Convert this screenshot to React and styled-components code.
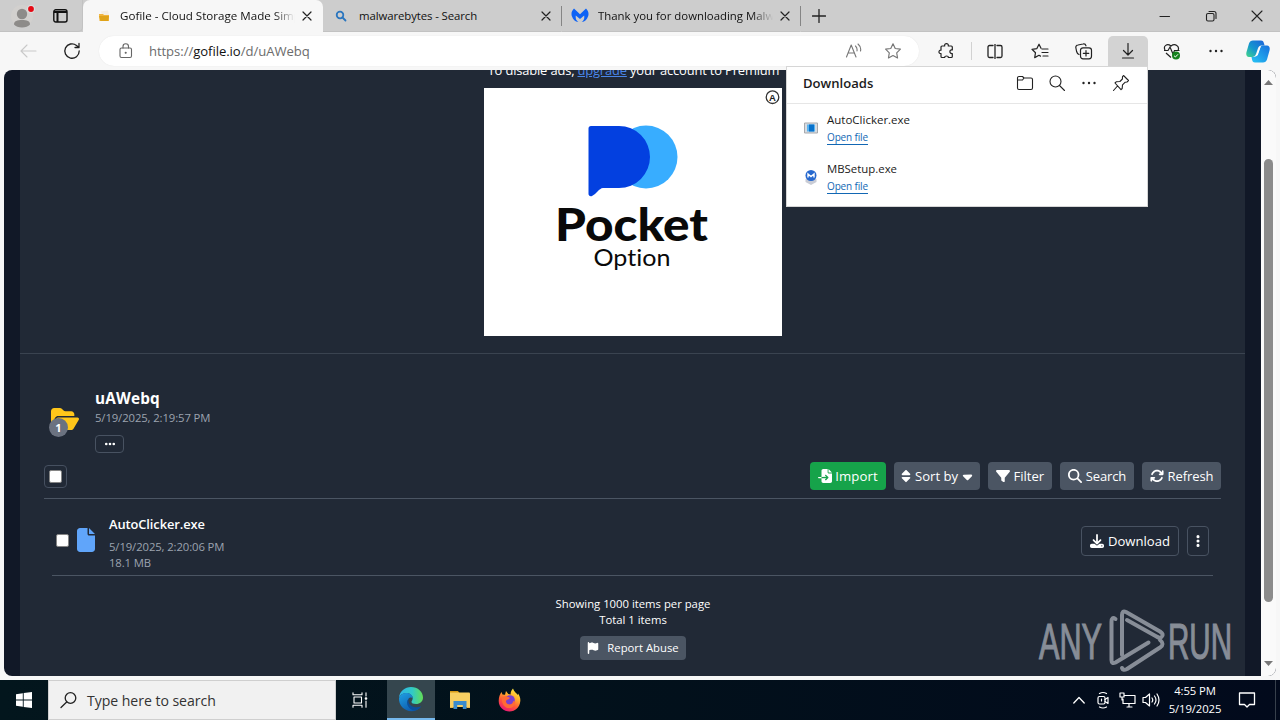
import React from "react";
import styled, { createGlobalStyle } from "styled-components";
import {
  FaFileImport, FaSort, FaCaretDown, FaFilter, FaMagnifyingGlass, FaArrowsRotate,
  FaDownload, FaEllipsisVertical, FaEllipsis, FaFolderOpen, FaFile, FaFlag,
} from "react-icons/fa6";

const Global = createGlobalStyle`
  * { box-sizing: border-box; }
  body { margin: 0; overflow: hidden; font-family: "Open Sans", "Noto Sans", sans-serif; }
  svg { display: block; flex: none; }
`;

const Desktop = styled.div`
  width: 1280px; height: 720px; display: flex; flex-direction: column;
  background: #f7f7f7; position: relative; overflow: hidden;
`;

const Text = styled.span`
  font-size: ${(p) => p.$size || 12}px;
  line-height: ${(p) => p.$line || 16}px;
  letter-spacing: ${(p) => p.$track || 0}px;
  font-weight: ${(p) => p.$weight || 400};
  color: ${(p) => p.$color || "inherit"};
  white-space: nowrap;
`;

/* Browser chrome */
const TabStrip = styled.div`
  height: 32px; display: flex; background: #cdcdcd; flex: none;
`;
const ProfileArea = styled.div`
  width: 83px; display: flex; align-items: center; padding: 0 14px 0 10px; gap: 17px;
  border-bottom: 1px solid #c2c2c2; border-right: 1px solid #c2c2c2;
  border-radius: 0 0 5px 0;
`;
const Tab = styled.div`
  width: ${(p) => p.$width || 238}px; height: 32px; display: flex; align-items: center;
  padding-left: ${(p) => p.$pad || 11}px;
  background: ${(p) => (p.$active ? "#f7f7f7" : "transparent")};
  border-radius: ${(p) => (p.$active ? "7px 7px 0 0" : "0")};
  border-bottom: ${(p) => (p.$active ? "none" : "1px solid #c2c2c2")};
`;
const TabTitle = styled.div`
  width: 175px; height: 20px; margin-left: ${(p) => p.$gap || 10}px; overflow: hidden; color: #111;
  display: flex; align-items: center;
  ${(p) => p.$fade && "mask-image: linear-gradient(90deg, #000 88%, transparent 100%);"}
`;
const TabClose = styled.div`
  margin-left: 7px;
`;
const TabDivider = styled.div`
  width: 1px; height: 20px; margin-top: 6px; background: #858585;
`;
const StripRest = styled.div`
  flex: 1; display: flex; align-items: center; padding-left: 11px; border-bottom: 1px solid #c2c2c2;
`;
const WindowButtons = styled.div`
  margin-left: auto; display: flex; gap: 32px; padding-right: 16px; align-items: center;
`;
const Toolbar = styled.div`
  height: 38px; flex: none; display: flex; align-items: center; background: #f7f7f7; padding-left: 20px;
`;
const NavButtons = styled.div`
  width: 79px; display: flex; gap: 26px; align-items: center;
`;
const AddressBar = styled.div`
  width: 821px; height: 30px; border-radius: 15px; background: #fff;
  display: flex; align-items: center; padding: 0 17px 0 20px; box-shadow: 0 0 1px #ddd;
`;
const Url = styled.div`
  margin-left: 16px; flex: 1; color: #6c6c6c; display: flex;
  b { font-weight: 400; color: #111; }
`;
const AddressActions = styled.div`
  display: flex; gap: 22px; align-items: center;
`;
const Tools = styled.div`
  flex: 1; display: flex; align-items: center;
`;
const Tool = styled.div`
  width: ${(p) => p.$width || 44}px; height: 30px; flex: none; display: flex; align-items: center; justify-content: center;
  background: ${(p) => (p.$pressed ? "#d3d3d3" : "transparent")}; border-radius: 5px 5px 0 0;
`;
const ToolDivider = styled.div`
  width: 1px; height: 18px; background: #d2d2d2; margin: 0 11px 0 -4px;
`;

/* Page */
const Viewport = styled.div`
  margin: 0 4px; height: 606px; flex: none; display: flex; border-radius: 8px; overflow: hidden; background: #111827;
`;
const Site = styled.div`
  width: 1225px; margin: 0 16px; background: #212936; overflow: hidden; color: #fff;
  display: flex; flex-direction: column;
`;
const AdSection = styled.section`
  height: 284px; flex: none; border-bottom: 1px solid #3a4350; display: flex; flex-direction: column; align-items: center;
`;
const AdNotice = styled.div`
  height: 24px; margin-top: -12px; padding-left: 2px; display: flex; align-items: center;
  a { color: #4a86e8; text-decoration: underline; }
`;
const AdBanner = styled.div`
  width: 298px; height: 248px; margin-top: 6px; margin-left: 1px; background: #fff;
  display: flex; flex-direction: column;
`;
const AdMark = styled.div`
  align-self: flex-end; margin: 2px 2px 0 0;
`;
const BrandDrawing = styled.svg`
  margin: 17px 0 0 71px; font-variant-ligatures: none;
`;
const FolderSection = styled.section`
  display: flex; padding: 34px 0 0 31px; height: 108px; flex: none;
`;
const FolderIcon = styled.div`
  width: 44px; color: #ffc61a; padding-top: 17px;
`;
const CountBadge = styled.div`
  width: 19px; height: 19px; margin: -15px 0 0 -2px; border-radius: 50%; background: #6b7280; position: relative;
  display: flex; align-items: center; justify-content: center; color: #fff;
`;
const Column = styled.div`
  display: flex; flex-direction: column; align-items: ${(p) => p.$align || "flex-start"};
`;
const OutlineButton = styled.div`
  width: ${(p) => p.$width}px; height: ${(p) => p.$height}px; border: 1px solid #485261; border-radius: 4px;
  display: flex; align-items: center; justify-content: center; gap: 4px; color: #fff;
`;
const Actions = styled.div`
  margin: 0 24px; height: 37px; flex: none; border-bottom: 1px solid #4b5563; display: flex; gap: 8px;
`;
const SolidButton = styled.div`
  width: ${(p) => p.$width}px; height: ${(p) => p.$height || 28}px; border-radius: 4px;
  background: ${(p) => (p.$primary ? "#16a34a" : "#4b5563")}; color: #fff;
  display: flex; align-items: center; justify-content: center; gap: ${(p) => p.$gap || 3}px;
`;
const CheckFrame = styled.div`
  width: 23px; height: 23px; margin: 3px auto 0 0; border: 1px solid #465060; border-radius: 4px;
  display: flex; align-items: center; justify-content: center;
`;
const CheckBox = styled.div`
  width: 13px; height: 13px; background: #fff; border: 1px solid #858585; border-radius: 2px;
  margin-top: ${(p) => p.$top || 0}px;
`;
const FileRow = styled.div`
  margin: 0 32px; height: 77px; flex: none; border-bottom: 1px solid #4b5563;
  display: flex; padding: 16px 4px 0 4px;
`;
const FileGlyph = styled.div`
  margin: 13px 14px 0 8px; color: #60a5fa;
  svg { width: 18px; height: 24px; }
`;
const FileActions = styled.div`
  margin: 11px 0 0 auto; display: flex; gap: 8px;
`;
const Footer = styled.footer`
  display: flex; flex-direction: column; align-items: center; padding: 20px 0 0 1px;
`;
const Gap = styled.div`
  height: ${(p) => p.$h}px;
`;
const Scrollbar = styled.div`
  width: 15px; background: #fafafa; display: flex; flex-direction: column; align-items: center; padding: 10px 0;
`;
const Thumb = styled.div`
  width: 9px; height: 443px; margin-top: 74px; border-radius: 5px; background: #8b8b8b;
`;

/* Downloads flyout lies over the page */
const Flyout = styled.div`
  position: absolute; left: 786px; top: 66px; width: 362px; height: 141px; background: #fff;
  border: 1px solid #d6d6d6; color: #1b1b1b;
`;
const FlyoutHeader = styled.div`
  height: 37px; border-bottom: 1px solid #e6e6e6; display: flex; align-items: center; padding: 0 17px 5px 16px;
`;
const FlyoutTools = styled.div`
  margin-left: auto; display: flex; align-items: center; gap: 14px;
`;
const DotsSlot = styled.div`
  width: 18px; display: flex; justify-content: center;
`;
const DownloadItem = styled.div`
  height: 49px; display: flex; padding: 8px 0 0 16px; gap: 8px;
`;
const DownloadIcon = styled.div`
  padding-top: 8px;
`;
const OpenLink = styled.div`
  color: #1267b4; border-bottom: 1px solid #1267b4; height: 16px; display: flex; margin-top: 1px;
`;

/* Watermark lies over the page */
const Watermark = styled.svg`
  position: absolute; left: 1036px; top: 608px;
`;

/* Taskbar */
const Taskbar = styled.div`
  margin-top: 4px; height: 40px; flex: none; display: flex;
  background: linear-gradient(90deg, #03161d 0%, #02111b 45%, #020a1c 100%); color: #fff;
`;
const StartButton = styled.div`
  width: 48px; display: flex; align-items: center; justify-content: center;
`;
const SearchBox = styled.div`
  width: 288px; background: #f1f1f1; border: 1px solid #cfcfcf; display: flex; align-items: center;
  padding: 1px 0 0 11px; gap: 9px; color: #333;
`;
const TaskItem = styled.div`
  width: ${(p) => p.$width || 48}px; display: flex; align-items: center; justify-content: center;
  background: ${(p) => (p.$active ? "#35464e" : "transparent")};
  border-bottom: ${(p) => (p.$active ? "2px solid #76b9ed" : "none")};
  padding-right: ${(p) => p.$shift || 0}px;
`;
const Tray = styled.div`
  margin-left: auto; display: flex; align-items: center; gap: 6px; padding-right: 4px;
`;
const TrayIcon = styled.div`
  width: 18px; display: flex; justify-content: center;
`;
const Clock = styled.div`
  width: 60px; display: flex; flex-direction: column; align-items: center; margin: 0 1px 0 -1px;
`;
const NoticeIcon = styled.div`
  margin-left: 6px;
`;
const PeekEdge = styled.div`
  width: 1px; height: 40px; background: #37404c; margin-left: 13px;
`;

const Line = ({ w = 16, h = w, box = `0 0 ${w} ${h}`, color = "#222", sw = 1.1, children }) => (
  <svg width={w} height={h} viewBox={box} fill="none" stroke={color} strokeWidth={sw} strokeLinecap="round" strokeLinejoin="round">
    {children}
  </svg>
);
const Cross = ({ size = 10 }) => (
  <Line w={size} h={size} box="0 0 10 10" sw={1.2}><path d="M1 1l8 8M9 1l-8 8" /></Line>
);
const Dots = () => (
  <svg width="16" height="16" fill="#222"><circle cx="2.500" cy="8" r="1.200" /><circle cx="8" cy="8" r="1.200" /><circle cx="13.500" cy="8" r="1.200" /></svg>
);

const Profile = () => (
  <svg width="26" height="28" viewBox="0 0 26 28">
    <circle cx="12" cy="14" r="11" fill="#d2d0ce" />
    <circle cx="12" cy="12" r="5.200" fill="#8d8b89" />
    <path d="M4 22.500c0-3.500 3-4.500 8-4.500s8 1 8 4.500c-3 4-13 4-16 0z" fill="#8d8b89" />
    <circle cx="21" cy="7" r="4" fill="#ddd" /><circle cx="21" cy="7" r="2.900" fill="#e50914" />
  </svg>
);
const Workspaces = () => (
  <svg width="15" height="14" viewBox="0 0 15 14" fill="none" stroke="#111" strokeWidth="1.400">
    <rect x=".8" y=".8" width="13.200" height="12.200" rx="2" /><path d="M1 3h13M4.500 3v10" strokeWidth="2" />
  </svg>
);
const GofileIcon = () => (
  <svg width="16" height="16" viewBox="0 0 16 16">
    <path d="M4 3.500l7-1 1 4.500H5z" fill="#f3eee4" /><path d="M2 6h4l1 1h5v6H2.500z" fill="#f0b43c" /><path d="M2 8h10l-1 5H3.500z" fill="#dfa319" />
  </svg>
);
const MalwareIcon = ({ w = 18 }) => (
  <svg width={w} height={w * 0.9} viewBox="0 0 18 16" fill="#0d62f5">
    <path d="M3 1.500C1 3.500-.2 6 .9 9.200C2 12.500 4 14.500 7.300 15C4.800 13 4.500 11 4.800 8.500L9 12L13.200 8.500c.3 2.500-.1 4.500-2.500 6.500C14 14.500 16 12.500 17.100 9.200C18.200 6 17 3.500 15 1.500L9 7.100z" />
  </svg>
);
const LockIcon = () => (
  <Line w={14} h={16} color="#666"><rect x="1" y="5" width="11.500" height="9.500" rx="1.500" /><path d="M4 5V3.500a2.700 2.700 0 0 1 5.500 0V5" /><circle cx="6.700" cy="9.700" r=".5" fill="#666" /></Line>
);
const StarPath = "M8 1.200l2.100 4.400 4.900.7-3.500 3.400.8 4.900L8 12.300l-4.300 2.300.8-4.900L1 6.300l4.900-.7z";

const CopilotIcon = () => (
  <svg width="24" height="23" viewBox="0 0 24 23">
    <defs>
      <linearGradient id="cpa" x1="0" y1="1" x2="1" y2="0"><stop stopColor="#43d789" /><stop offset=".45" stopColor="#1596cf" /><stop offset="1" stopColor="#1d62db" /></linearGradient>
      <linearGradient id="cpb" x1="0" y1="1" x2="1" y2="0"><stop stopColor="#28c4f4" /><stop offset="1" stopColor="#1670dd" /></linearGradient>
    </defs>
    <path d="M7 .5h8c2 0 2.500 1 3 3l.6 2h-3c-2 0-3 1-3.700 3L10 14c-.7 2-2 3-4 3H3C.5 17-.2 14.500.5 12l2.500-8.500C3.700 1.500 5 .5 7 .5z" fill="url(#cpa)" />
    <path d="M17 22.500H9c-2 0-2.500-1-3-3L5.500 17H7c3 0 4-1 4.700-3L14 8c.7-2 1.700-2.500 4-2.500h3c2.500 0 3.200 2.500 2.500 5L21 19.500c-.7 2-2 3-4 3z" fill="url(#cpb)" />
    <path d="M12.800 9c.5-1.500 1-2.300 2-2.500l-2.600 7.500C11.700 15.500 11 16 10 16z" fill="#fff" />
  </svg>
);
const EdgeIcon = () => (
  <svg width="26" height="26" viewBox="0 0 26 26">
    <defs>
      <linearGradient id="ea" x1="0" y1=".3" x2="1" y2=".3"><stop stopColor="#2fb4e8" /><stop offset=".55" stopColor="#31c9c7" /><stop offset="1" stopColor="#63de55" /></linearGradient>
      <linearGradient id="eb" x1="0" y1="0" x2=".7" y2="1"><stop stopColor="#1fa0e4" /><stop offset="1" stopColor="#0c55a8" /></linearGradient>
    </defs>
    <path d="M1 12C1.500 5 7 1 13 1c7 0 12 5 12 10.500 0 4-3 6.500-7 6.500-3 0-4.500-1-4.500-2.300 0-.8 1.200-1.400 1.200-3.500C14.700 9 11.500 7 8 7c-3.500 0-6 2.500-7 5z" fill="url(#ea)" />
    <path d="M1 12c1-3 3.700-5 7-5 3.800 0 6.700 2 6.700 5-1-.8-3-1-4 .5C7.500 17 12 22 18 22c2 0 4-.7 5-1.500-2 3-5.500 4.700-9.500 4.700C6 25.200.5 19 1 12z" fill="url(#eb)" />
    <path d="M10.700 12.500C6.500 17 11 24 16.500 24.500c3-.7 5-2 6.700-4.200-5.500 2.700-14.700-.3-12.500-7.800z" fill="#0b4f9c" />
  </svg>
);
const ExplorerIcon = () => (
  <svg width="22" height="20" viewBox="0 0 22 20">
    <path d="M1 1h8l1.500 2H1z" fill="#d89a17" /><path d="M1 2.500h19a1 1 0 0 1 1 1V17H1z" fill="#f8cf62" />
    <path d="M4.500 19v-8h13v8h-3.700v-4H8.200v4z" fill="#3a8bcd" /><path d="M1 17h3.500v1H1zM17.500 17H21v1h-3.500z" fill="#e6b54a" />
  </svg>
);
const FirefoxIcon = () => (
  <svg width="23" height="24" viewBox="0 0 23 24">
    <defs><linearGradient id="ff" x1=".8" y1="0" x2=".3" y2="1"><stop stopColor="#fff044" /><stop offset=".35" stopColor="#ffae2c" /><stop offset=".65" stopColor="#ff5a36" /><stop offset="1" stopColor="#e91478" /></linearGradient></defs>
    <path d="M3.500 4l1 2.500 2.500.3L8 3l2.300 3 2.300.5C12.500 4 13.500 2 15 .5c.8 3 3.500 4.500 4.700 6.500l.3-1.500C22 8 22.500 11 22.300 13c-.4 6-5 10.500-10.800 10.500S.7 19 .7 13C.7 9 2 6 3.500 4z" fill="url(#ff)" />
    <circle cx="12" cy="12" r="4.800" fill="#7a3fd0" />
    <path d="M4 9c2.500-1.500 5.300-1 8 1-1 1.500-3.500 1.500-4 3s1 3.500 3.500 3.500c2 0 3.500-1.500 3.700-3.500l2 1c-.5 4-3 6-6 6-5 0-8-5-7.200-11z" fill="#ff6a35" />
  </svg>
);

const Watch = () => (
  <Watermark width="198" height="66" viewBox="0 0 198 66">
    <g fill="#878d97" stroke="#878d97" strokeWidth="1.200" fontFamily="'Liberation Sans Narrow', 'Liberation Sans', sans-serif" fontSize="50.500">
      <text x="3" y="50.500" textLength="63" lengthAdjust="spacingAndGlyphs">ANY</text>
      <text x="132" y="50.500" textLength="64" lengthAdjust="spacingAndGlyphs">RUN</text>
    </g>
    <g fill="none" stroke="#878d97" strokeWidth="4" strokeLinecap="round" strokeLinejoin="round">
      <path d="M79.500 11q-4-3-4 3v38q0 4.500 4 2.500l33-20" />
      <path d="M86 47V7q0-5 4-3l34 19.500q4.500 3 1.500 5.500-2 1.500-5-.5L91 12" />
      <path d="M86 60q1 3 5 1l33-21.500q5-3.500 0-7.500" />
    </g>
  </Watermark>
);

export default function App() {
  return (
    <Desktop>
      <Global />
      <TabStrip>
        <ProfileArea><Profile /><Workspaces /></ProfileArea>
        <Tab $active $width={240} $pad={14}>
          <GofileIcon />
          <TabTitle $fade $gap={7}><Text $size={11.6}>Gofile - Cloud Storage Made Simple</Text></TabTitle>
          <TabClose><Cross /></TabClose>
        </Tab>
        <Tab $pad={12}>
          <Line w={12} h={12} color="#2b76bf" sw={1.8}><circle cx="5" cy="5" r="3.300" /><path d="M7.500 7.500l3 3" /></Line>
          <TabTitle $gap={12}><Text $size={11.4} $track={-0.1}>malwarebytes - Search</Text></TabTitle>
          <TabClose><Cross /></TabClose>
        </Tab>
        <TabDivider />
        <Tab $width={238} $pad={9}>
          <MalwareIcon />
          <TabTitle $fade $gap={9}><Text $size={11.4}>Thank you for downloading Malware</Text></TabTitle>
          <TabClose><Cross /></TabClose>
        </Tab>
        <TabDivider />
        <StripRest>
          <Line w={14} sw={1.3}><path d="M7 .5v13M.5 7h13" /></Line>
          <WindowButtons>
            <Line w={14}><path d="M2 7.500h9.500" /></Line>
            <Line w={14}><rect x="2.500" y="4.500" width="7.500" height="7.500" rx="1.500" /><path d="M5 2.500h5a2 2 0 0 1 2 2v5" /></Line>
            <Line w={14}><path d="M2 2l10 10M12 2L2 12" /></Line>
          </WindowButtons>
        </StripRest>
      </TabStrip>

      <Toolbar>
        <NavButtons>
          <Line w={17} h={16} color="#c9c9c9"><path d="M16 8H1M7 2L1 8l6 6" /></Line>
          <Line w={18} h={18} sw={1.3}><path d="M16.200 9A7.200 7.200 0 1 1 13.500 3.400L16 5.500M16 1.500v4h-4" /></Line>
        </NavButtons>
        <AddressBar>
          <LockIcon />
          <Url><Text $size={13.1} $track={-0.05}>https://<b>gofile.io</b>/d/uAWebq</Text></Url>
          <AddressActions>
            <Line w={18} h={16} color="#777"><path d="M2.500 14l4.700-12 4.800 12M4.500 10h5.500M11.500 3q2 2 1.500 5M14 1q3.500 3 2.500 7" /></Line>
            <Line w={18} h={18} box="-.5 -.5 17 17" color="#777"><path d={StarPath} /></Line>
          </AddressActions>
        </AddressBar>
        <Tools>
          <Tool $width={56}>
            <Line w={18} sw={1.2}><path d="M3 5a1 1 0 0 1 1-1h2.700c-.7-3.200 4.200-3.200 3.600 0h3a1 1 0 0 1 1 1v3c-3.200-.7-3.200 4 0 3.500v3a1 1 0 0 1-1 1h-3c.6-2-4-2-3.600 0H4a1 1 0 0 1-1-1v-3c-2.700.3-2.700-3.500 0-3.300z" /></Line>
          </Tool>
          <ToolDivider />
          <Tool $width={24}><Line w={16} h={15} sw={1.3}><path d="M6 1.500H2.500a1.500 1.500 0 0 0-1.500 1.500v9a1.500 1.500 0 0 0 1.500 1.500H6M10 1.500h3.500A1.500 1.500 0 0 1 15 3v9a1.500 1.500 0 0 1-1.500 1.500H10M8 0v15" /></Line></Tool>
          <Tool $width={65}><Line w={18} h={16} sw={1.2}><path d="M10 5.300L8 1.200 5.900 5.600 1 6.300l3.500 3.400-.8 4.900L8 12.300l1.500.8M11 6h6M11 9.500h6M12 13h5" /></Line></Tool>
          <Tool $width={24}><Line w={18} h={17} sw={1.2}><path d="M4 11.500C2.500 11 2 10 1.600 8.500l-.8-4A2.500 2.500 0 0 1 3 2l5-1a2.500 2.500 0 0 1 3 1.800" /><rect x="5.500" y="4.800" width="11" height="11" rx="2.500" /><path d="M11 7.500v5.500M8.300 10.300h5.500" /></Line></Tool>
          <Tool $width={12} />
          <Tool $pressed $width={40}><Line w={14} h={16} sw={1.2}><path d="M7 .5v11M2.500 7.500L7 12l4.500-4.500M1.500 15h11" /></Line></Tool>
          <Tool $width={48}>
            <svg width="18" height="17" viewBox="0 0 18 17" fill="none" stroke="#222" strokeWidth="1.200">
              <path d="M2 7C0 3 4 0 8 3c4-3 9 0 7 4.500M1 7.500h4L7 4l3 7 1.500-3.500h5M3 10l5 4.500" />
              <circle cx="13" cy="12.500" r="4" fill="#16811e" stroke="none" /><path d="M11 12.700l1.400 1.300 2.600-2.700" stroke="#fff" strokeWidth="1" />
            </svg>
          </Tool>
          <Tool $width={40}><Dots /></Tool>
          <Tool $width={44}><CopilotIcon /></Tool>
        </Tools>
      </Toolbar>

      <Viewport>
        <Site>
          <AdSection>
            <AdNotice><Text $size={12.9} $line={24} $track={-0.15}>To disable ads, <a>upgrade</a> your account to Premium</Text></AdNotice>
            <AdBanner>
              <AdMark>
                <svg width="15" height="15"><circle cx="7.500" cy="7.200" r="6.300" fill="none" stroke="#333" strokeWidth="1.300" /><text x="7.500" y="10.700" textAnchor="middle" fontFamily="Liberation Sans" fontWeight="700" fontSize="9.500" fill="#222">A</text></svg>
              </AdMark>
              <BrandDrawing width="156" height="152" viewBox="0 0 156 152">
                <circle cx="91" cy="35" r="31.500" fill="#38adff" />
                <path d="M36 4h28a31 31 0 0 1 0 62H48c-2 0-4 2-5 3-2 2-4 4-6 5-2 .7-3.500-.5-3.500-2V6.500Q33.500 4 36 4z" fill="#0340e0" />
                <g fill="#090909" fontFamily="Lato, sans-serif">
                  <text x="0" y="119.300" fontSize="46" fontWeight="900" textLength="153" lengthAdjust="spacingAndGlyphs">Pocket</text>
                  <text x="38.500" y="144" fontSize="22.500" textLength="77" lengthAdjust="spacingAndGlyphs">Option</text>
                </g>
              </BrandDrawing>
            </AdBanner>
          </AdSection>

          <FolderSection>
            <FolderIcon><FaFolderOpen size={28} /><CountBadge><Text $size={11} $weight={700}>1</Text></CountBadge></FolderIcon>
            <Column>
              <Text $size={15.3} $line={20} $weight={700} $track={0.2}>uAWebq</Text>
              <Text $size={11.3} $line={20} $track={-0.1} $color="#9ca3af">5/19/2025, 2:19:57 PM</Text>
              <Gap $h={7} />
              <OutlineButton $width={29} $height={18}><FaEllipsis size={12} /></OutlineButton>
            </Column>
          </FolderSection>

          <Actions>
            <CheckFrame><CheckBox /></CheckFrame>
            <SolidButton $primary $width={76} $gap={3}><FaFileImport size={14} /><Text $size={13.2} $track={0.1}>Import</Text></SolidButton>
            <SolidButton $width={86} $gap={2}><FaSort size={14} /><Text $size={13.1}>Sort by</Text><FaCaretDown size={15} /></SolidButton>
            <SolidButton $width={64} $gap={3.5}><FaFilter size={14} /><Text $size={13.1}>Filter</Text></SolidButton>
            <SolidButton $width={74} $gap={4}><FaMagnifyingGlass size={14} /><Text $size={13} $track={-0.15}>Search</Text></SolidButton>
            <SolidButton $width={79} $gap={4}><FaArrowsRotate size={14} /><Text $size={13} $track={-0.1}>Refresh</Text></SolidButton>
          </Actions>

          <FileRow>
            <CheckBox $top={19} />
            <FileGlyph><FaFile /></FileGlyph>
            <Column>
              <Text $size={12.9} $line={18} $weight={600} $track={-0.1}>AutoClicker.exe</Text>
              <Gap $h={6} />
              <Text $size={11.3} $track={-0.1} $color="#9ca3af">5/19/2025, 2:20:06 PM</Text>
              <Text $size={11.3} $track={-0.1} $color="#9ca3af">18.1 MB</Text>
            </Column>
            <FileActions>
              <OutlineButton $width={98} $height={30}><FaDownload size={14} /><Text $size={13.1}>Download</Text></OutlineButton>
              <OutlineButton $width={22} $height={30}><FaEllipsisVertical size={14} /></OutlineButton>
            </FileActions>
          </FileRow>

          <Footer>
            <Text $size={11.3}>Showing 1000 items per page</Text>
            <Text $size={11.3}>Total 1 items</Text>
            <Gap $h={8} />
            <SolidButton $width={106} $height={24} $gap={8}><FaFlag size={12} /><Text $size={11.3}>Report Abuse</Text></SolidButton>
          </Footer>
        </Site>
        <Scrollbar>
          <svg width="9" height="5"><path d="M0 5L4.500 0 9 5z" fill="#777" /></svg>
          <Thumb />
          <Gap $h={59} />
          <svg width="9" height="5"><path d="M0 0l4.500 5L9 0z" fill="#777" /></svg>
        </Scrollbar>
      </Viewport>

      <Taskbar>
        <StartButton>
          <svg width="16" height="16" fill="#fff"><path d="M0 2.200L6.800 1.200V7.500H0zM7.700 1.100L16 0v7.500H7.700zM0 8.400h6.800v6.400L0 13.800zM7.700 8.400H16V16l-8.300-1.100z" /></svg>
        </StartButton>
        <SearchBox>
          <Line w={18} color="#222" sw={1.3}><circle cx="10.500" cy="6" r="5.300" /><path d="M6.700 10L1 15.500" /></Line>
          <Text $size={14.1} $line={20} $track={-0.05}>Type here to search</Text>
        </SearchBox>
        <TaskItem $width={51} $shift={3}>
          <Line w={16} h={16} color="#fff"><path d="M1 .8v2h9v-2M1 15.200v-2h9v2M2 5h7.500v6H2zM14 .8V4M14 9v6.200" /><circle cx="14" cy="6.500" r=".8" fill="#fff" /></Line>
        </TaskItem>
        <TaskItem $active><EdgeIcon /></TaskItem>
        <TaskItem $width={50}><ExplorerIcon /></TaskItem>
        <TaskItem><FirefoxIcon /></TaskItem>
        <Tray>
          <TrayIcon><Line w={12} h={12} color="#fff" sw={1.3}><path d="M.8 9L6 3.500 11.200 9" /></Line></TrayIcon>
          <TrayIcon><Line w={18} h={18} color="#fff" sw={1.2}><rect x="4" y="5.500" width="7" height="7.500" rx="1.500" /><path d="M11 8.500l3-2v6l-3-2M5.500 2.500q3.500-2 7 0M5.500 16q3.500 2 7 0M7.500 8v2" /></Line></TrayIcon>
          <TrayIcon><Line w={17} h={16} color="#fff" sw={1.2}><path d="M5 3.500h11v8H4V7M8 15h5M10 11.500V15M1 1h4v4H1zM3 5v3" /></Line></TrayIcon>
          <TrayIcon><Line w={18} h={16} color="#fff" sw={1.2}><path d="M1 5.500h2.500L7.500 2v12l-4-3.500H1zM10 6q1.500 2 0 4M12.500 4q3 4 0 8M15 2q4 6 0 12" /></Line></TrayIcon>
          <Clock><Text $size={11.3} $line={18} $track={-0.1}>4:55 PM</Text><Text $size={11.3} $line={18} $track={-0.1}>5/19/2025</Text></Clock>
          <NoticeIcon><Line w={18} h={18} color="#fff" sw={1.3}><path d="M1.500 2h15v11.500h-5L9 16l-2.500-2.500h-5z" /></Line></NoticeIcon>
          <PeekEdge />
        </Tray>
      </Taskbar>

      <Flyout>
        <FlyoutHeader>
          <Text $size={13.1} $weight={600}>Downloads</Text>
          <FlyoutTools>
            <Line w={18} h={16}><path d="M1.500 3A1.500 1.500 0 0 1 3 1.500h3.500L8 3h7a1.500 1.500 0 0 1 1.500 1.500v8.500a1.500 1.500 0 0 1-1.500 1.500H3A1.500 1.500 0 0 1 1.500 13zM1.500 5h5L8 3" /></Line>
            <Line w={18} h={18}><circle cx="7.500" cy="7.500" r="5.500" /><path d="M11.500 11.500l5 5" /></Line>
            <DotsSlot><Dots /></DotsSlot>
            <Line w={18} h={18}><path d="M11.500 1.500l5 5-1.500 1.500-2 .3-2.500 2.500-.3 3.700-1.200 1.200L3 9l1.200-1.200 3.700-.3L10.400 5l.1-2.300zM5.500 12L1.500 16.500" /></Line>
          </FlyoutTools>
        </FlyoutHeader>
        <DownloadItem>
          <DownloadIcon>
            <svg width="16" height="16"><path d="M1.500 3h13v10h-13z" fill="#d7dce2" stroke="#a7a9ad" /><path d="M4 4.500h8v7H4z" fill="#59b3ef" /><path d="M6 4.500h5v7H6z" fill="#0872cc" /></svg>
          </DownloadIcon>
          <Column><Text $size={11.5}>AutoClicker.exe</Text><OpenLink><Text $size={10} $line={16} $track={-0.15}>Open file</Text></OpenLink></Column>
        </DownloadItem>
        <DownloadItem>
          <DownloadIcon>
            <svg width="16" height="16"><path d="M2.500 10l5.500-2 5.500 2v3l-5.500 3-5.500-3z" fill="#c9ccd5" /><circle cx="8" cy="6.500" r="5.500" fill="#2769cf" /><path d="M5 8.500V5l3 2.500L11 5v3.500" fill="none" stroke="#fff" strokeWidth="1.400" /></svg>
          </DownloadIcon>
          <Column><Text $size={11.4}>MBSetup.exe</Text><OpenLink><Text $size={10} $line={16} $track={-0.15}>Open file</Text></OpenLink></Column>
        </DownloadItem>
      </Flyout>
      <Watch />
    </Desktop>
  );
}
